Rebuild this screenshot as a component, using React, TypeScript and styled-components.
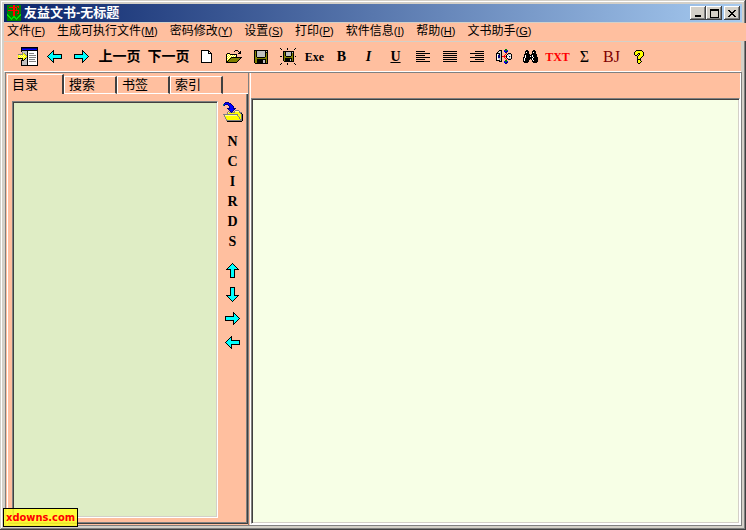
import React, { useState } from "react";
import styled, { createGlobalStyle, css } from "styled-components";

const salmon = "#ffbf9f";
const face = "#d4d0c8";
const sans = `"Liberation Sans", "Noto Sans CJK SC", sans-serif`;
const serif = `"Liberation Serif", "Noto Sans CJK SC", serif`;

const GlobalStyle = createGlobalStyle`
  * { box-sizing: border-box; }
  body { margin: 0; background: ${face}; font-family: ${sans}; color: #000; }
  button { font: inherit; color: inherit; background: none; border: 0; padding: 0; margin: 0; }
`;

const sunken = css`
  border: 1px solid;
  border-color: #808080 #fff #fff #808080;
  box-shadow: inset 1px 1px #404040, inset -1px -1px ${face};
`;

const Window = styled.div`
  position: relative;
  display: flex;
  flex-direction: column;
  min-height: 100vh;
  padding: 4px;
  background: ${face};
  box-shadow: inset -1px -1px #404040, inset 1px 1px ${face},
    inset -2px -2px #808080, inset 2px 2px #fff;
`;

const TitleBar = styled.header`
  display: flex;
  align-items: center;
  height: 18px;
  padding: 0 2px 0 3px;
  background: linear-gradient(90deg, #0a246a, #a6caf0);
`;

const Title = styled.h1`
  flex: 1;
  margin: 0 0 0 3px;
  color: #fff;
  font-size: 13px;
  line-height: 18px;
  font-weight: 700;
`;

const CaptionButtons = styled.div`
  display: flex;
`;

const CaptionButton = styled.button<{ $apart?: boolean }>`
  display: flex;
  align-items: center;
  justify-content: center;
  width: 16px;
  height: 14px;
  margin-left: ${(p) => (p.$apart ? 2 : 0)}px;
  background: ${face};
  box-shadow: inset -1px -1px #404040, inset 1px 1px #fff, inset -2px -2px #808080;
`;

const MenuBar = styled.nav`
  display: flex;
  align-items: flex-start;
  gap: 12px;
  height: 18px;
  margin: 1px -4px 1px 0;
  padding-left: 3px;
  background: ${salmon};
`;

const MenuItem = styled.button`
  font-size: 12px;
  line-height: 16px;
  white-space: nowrap;
`;

const Hotkey = styled.span`
  font-size: 11px;
`;

const Toolbar = styled.div`
  display: flex;
  align-items: center;
  height: 30px;
  margin-right: 1px;
  padding-left: 10px;
  background: ${salmon};
  border-bottom: 1px solid #fff;
`;

const Tool = styled.button<{ $wide?: boolean }>`
  display: flex;
  align-items: center;
  justify-content: center;
  flex: 0 0 ${(p) => (p.$wide ? 49 : 27)}px;
  height: 24px;
  white-space: nowrap;
`;

const ToolText = styled.span<{ $size: number; $color?: string; $look?: "italic" | "underline" | "light" }>`
  font-family: ${serif};
  font-size: ${(p) => p.$size}px;
  line-height: 20px;
  font-weight: ${(p) => (p.$look === "light" ? 400 : 700)};
  color: ${(p) => p.$color ?? "#000"};
  font-style: ${(p) => (p.$look === "italic" ? "italic" : "normal")};
  text-decoration: ${(p) => (p.$look === "underline" ? "underline" : "none")};
`;

const Body = styled.main`
  flex: 1;
  display: flex;
  margin-left: 1px;
  border: 1px solid #808080;
  background: ${salmon};
`;

const LeftPane = styled.section`
  flex: 0 0 243px;
  display: flex;
  flex-direction: column;
  padding: 1px 0 1px 1px;
  border-right: 1px solid #808080;
`;

const Tabs = styled.div`
  display: flex;
  align-items: flex-end;
`;

const Tab = styled.button<{ $active: boolean }>`
  width: ${(p) => (p.$active ? 57 : 53)}px;
  height: ${(p) => (p.$active ? 20 : 18)}px;
  padding-left: 4px;
  text-align: left;
  font-size: 13px;
  line-height: 16px;
  border-top: 1px solid #fff;
  border-left: 1px solid #fff;
  border-right: 2px solid #404040;
  border-bottom: ${(p) => (p.$active ? 0 : 1)}px solid #fff;
`;

const TabFill = styled.div`
  flex: 1;
  border-bottom: 1px solid #fff;
`;

const TabPanel = styled.div`
  flex: 1;
  display: flex;
  padding: 7px 0 5px 4px;
  border-left: 1px solid #fff;
  border-right: 1px solid #404040;
  border-bottom: 1px solid #404040;
  box-shadow: inset -1px -1px #808080;
`;

const Tree = styled.div`
  flex: 1;
  background: #dfedc5;
  ${sunken}
`;

const SideTools = styled.div`
  flex: 0 0 29px;
  display: flex;
  flex-direction: column;
  align-items: center;
`;

const SideButton = styled.button<{ $kind: "folder" | "letter" | "arrow" }>`
  display: flex;
  align-items: center;
  justify-content: center;
  width: 24px;
  height: ${(p) => ({ folder: 21, letter: 20, arrow: 24 })[p.$kind]}px;
  font-family: ${serif};
  font-size: 14px;
  font-weight: 700;
`;

const SideGroup = styled.div<{ $gap: number }>`
  margin-top: ${(p) => p.$gap}px;
`;

const RightPane = styled.section`
  flex: 1;
  display: flex;
  flex-direction: column;
  margin-left: 1px;
  border-left: 1px solid #fff;
  border-right: 1px solid #fff;
  border-bottom: 1px solid #fff;
`;

const EditorBand = styled.div`
  height: 25px;
`;

const Editor = styled.textarea`
  flex: 1;
  width: 100%;
  margin: 0;
  padding: 4px;
  resize: none;
  outline: none;
  border-radius: 0;
  font-family: ${sans};
  font-size: 13px;
  background: #f7ffe6;
  ${sunken}
`;

const Badge = styled.div`
  position: absolute;
  left: 3px;
  bottom: 3px;
  padding: 0 2px;
  border: 1px solid #000;
  background: rgba(255, 255, 40, 0.88);
  color: #f00;
  font: 700 11px/17px "DejaVu Sans Condensed", "DejaVu Sans", sans-serif;
`;

const palette: Record<string, string> = {
  K: "#000000", C: "#00ffff", W: "#ffffff", Y: "#ffff00", O: "#808000",
  G: "#808080", N: "#000080", B: "#0000ff", R: "#ff0000", L: "#c0c0c0",
  T: "#008080", E: "#008000", F: "#00e000", P: "#ffff99",
};

function Pixels({ rows }: { rows: string[] }) {
  const width = Math.max(...rows.map((r) => r.length));
  const runs: React.ReactElement[] = [];
  rows.forEach((row, y) => {
    for (let x = 0; x < row.length; ) {
      let end = x + 1;
      while (row[end] === row[x]) end++;
      if (palette[row[x]]) {
        runs.push(<rect key={`${x}-${y}`} x={x} y={y} width={end - x} height={1} fill={palette[row[x]]} />);
      }
      x = end;
    }
  });
  return (
    <svg width={width} height={rows.length} viewBox={`0 0 ${width} ${rows.length}`} shapeRendering="crispEdges" aria-hidden="true">
      {runs}
    </svg>
  );
}

const arrowLeft = [
  "......K........",
  ".....KK........",
  "....KCK........",
  "...KCCK........",
  "..KCCCKKKKKKKKK",
  ".KCCCCCCCCCCCCK",
  "KCCCCCCCCCCCCCK",
  ".KCCCCCCCCCCCCK",
  "..KCCCKKKKKKKKK",
  "...KCCK........",
  "....KCK........",
  ".....KK........",
  "......K........",
];
const mirror = (rows: string[]) => rows.map((r) => [...r].reverse().join(""));
const transpose = (rows: string[]) => [...rows[0]].map((_, i) => rows.map((r) => r[i]).join(""));
const arrowRight = mirror(arrowLeft);
const arrowUp = transpose(arrowLeft);
const arrowDown = [...arrowUp].reverse();

const panelIcon = [
  "...KKKKKKKKKKKKKKKKK",
  "...KNNNNNNNNNNNNNNNK",
  "...KBBBBBBBBBBBBBBBK",
  "...KKKKKKKKKKKKKKKKK",
  "...KLLLLLKWWWWWWWWWK",
  "....GLLLLKWWWWWWWWWK",
  "....GYGLLKWGGGGGWWWK",
  "GGGGGYYGLKWWWWWWWWWK",
  "YPYPYPYYGKWGGGGGGGWK",
  "YYPYPYPYYKWWWWWWWWWK",
  "YPYPYPYYGKWGGGGGGGWK",
  "KKKKKYYKLKWWWWWWWWWK",
  "...LKYKLLKWGGGGGGWWK",
  "...KKKLLLKWWWWWWWWWK",
  "...KLLLLLKWGGGGGGGWK",
  "...KLLLLLKWWWWWWWWWK",
  "...KLLLLLKWWWWWWWWWK",
  "...KLLLLLKWWWWWWWWWK",
  "...KKKKKKKKKKKKKKKKK",
];
const newIcon = [
  "KKKKKKKK...",
  "KWWWWWWKK..",
  "KWWWWWWKWK.",
  "KWWWWWWKKKK",
  "KWWWWWWWWWK",
  "KWWWWWWWWWK",
  "KWWWWWWWWWK",
  "KWWWWWWWWWK",
  "KWWWWWWWWWK",
  "KWWWWWWWWWK",
  "KWWWWWWWWWK",
  "KWWWWWWWWWK",
  "KKKKKKKKKKK",
];
const openIcon = [
  ".........KKK....",
  "........K...K.K.",
  ".............KK.",
  ".KKK........KKK.",
  "KYWYKKKKKKK.....",
  "KWYWYWYWYWK.....",
  "KYWYWYWYWYK.....",
  "KWYWYKKKKKKKKKKK",
  "KYWYKOOOOOOOOOK.",
  "KWYKOOOOOOOOOK..",
  "KYKOOOOOOOOOK...",
  "KKOOOOOOOOOK....",
  "KKKKKKKKKKK.....",
];
const saveIcon = [
  "KKKKKKKKKKKKKK",
  "KOKPPPPPPPPKPK",
  "KOKPPPPPPPPKKK",
  "KOKPPPPPPPPKOK",
  "KOKPPPPPPPPKOK",
  "KOKPPPPPPPPKOK",
  "KOKPPPPPPPPKOK",
  "KOOKKKKKKKKOOK",
  "KOOOOOOOOOOOOK",
  "KOOKKKKKKKKKOK",
  "KOOKKKKKKLLKOK",
  "KOOKKKKKKLLKOK",
  "KOOKKKKKKLLKOK",
  ".KKKKKKKKKKKKK",
].map((row) => row.replace(/P/g, "L"));
const saveRaysIcon = [
  "K......K.......K",
  ".K.....K......K.",
  "................",
  "...KKKKKKKKKKK..",
  "...KOKLLLLLKLK..",
  "...KOKLLLLLKOK..",
  "...KOKLLLLLKOK..",
  "...KOKLLLLLKOK..",
  "KK.KOOKKKKKOOK.K",
  "...KOOOOOOOOOK..",
  "...KOKKKKKKKOK..",
  "...KOKKKKKLKOK..",
  "...KOKKKKKLKOK..",
  "....KKKKKKKKKK..",
  "................",
  ".K.....K......K.",
  "K......K.......K",
];
const transferIcon = [
  ".........EE.....",
  "...KKK..BEEB....",
  "..KLLK..BBNN....",
  ".KLWLK...NN.....",
  "KKKKLK....R.KKK.",
  "KWLKLK...R.KLLLK",
  "KWNNLK..R.KWLWWK",
  "KWNNLKRRRRKLWNLK",
  "KWNNLK..R.KWWLWK",
  "KWLLLK...R.KLLLK",
  "KWWLLK....R.KKK.",
  "KKKKLK...EE.....",
  "...KKK..BEEB....",
  "........BBNN....",
  ".........NN.....",
];
const binocularsIcon = [
  "...KK.....KK...",
  "..KKKK...KKKK..",
  "..KWKK...KWKK..",
  "..KKKK...KKKK..",
  ".KKKKKK.KKKKKK.",
  ".KWKKKKKKWKKKK.",
  ".KWKKKKWKWKKKK.",
  "KKWKKKKKKKWKKKK",
  "KWKKKKKKKWKKKKK",
  "KWKKKKK.KWKKKKK",
  "KWKKKK...KWKKKK",
  "KKKKKK...KKKKKK",
  ".KKKK.....KKKK.",
];
const helpIcon = [
  "..KKKKKK..",
  ".KYYYYYYK.",
  "KYYYYYYYYK",
  "KYYYKKYYYK",
  "KYYK.KYYYK",
  ".KK.KYYYYK",
  "...KYYYYK.",
  "...KYYYK..",
  "...KYYK...",
  "...KKKK...",
  "...KYYK...",
  "...KYYYK..",
  "...KYYK...",
  "....KK....",
];
const folderIcon = [
  "..NNNN..............",
  ".NBBBBNN............",
  "TBNNNBBBN...........",
  "TN...NBBBN..........",
  "......NBBBN.........",
  "......NBBBN.........",
  "....NNNBBBNNN.......",
  ".....NBBBBBN........",
  "......NBBBN.GGGG....",
  ".....G.NBN.GPPPPG...",
  "....GPGGNGGGYYYYGGG.",
  "....GYYYYYYYYYYYYGK.",
  "GGGGGGGGGGGGGGGYYYGK",
  ".GPPPPPPPPPPPPGYYYGK",
  ".GYYYYYYYYYYYYYGYYGK",
  "..GYYYYYYYYYYYYYGYGK",
  "..GYYYYYYYYYYYYYGYGK",
  "...GYYYYYYYYYYYYYGGK",
  "...GGGGGGGGGGGGGGGGK",
  "....KKKKKKKKKKKKKKK.",
];
const appIcon = [
  "EEEEEERREEEEEE",
  "EEEEEERREERREE",
  "EERRRRRRRREREE",
  "EEEEEERREREEEE",
  "EEEEEERREREEEE",
  "ERRRRRRRRRRREE",
  "EEEEEERREEEREE",
  "EEEEEERREEEREE",
  "EEEEEERREERREE",
  "FEEEEERREEEEEF",
  "FFEEEERREEEEFF",
  "EFFEEEFFEEEFFE",
  "EEFFEFFFFEFFEE",
  "EEEFFFEEFFFEEE",
  "EEEEFEEEEFEEEE",
  "EEEEEEEEEEEEEE",
];

const textLines = (part: string) => {
  const full = "KKKKKKKKKKKKKK";
  const gap = "..............";
  return [part, gap, full, gap, part, gap, full, gap, part, gap, full];
};

const minimize = ["......", "......", "......", "......", "......", "......", "KKKKKK", "KKKKKK"];
const maximize = ["KKKKKKKKK", "KKKKKKKKK", "K.......K", "K.......K", "K.......K", "K.......K", "K.......K", "K.......K", "KKKKKKKKK"];
const closeMark = ["KK....KK", ".KK..KK.", "..KKKK..", "...KK...", "..KKKK..", ".KK..KK.", "KK....KK"];

const menus: [string, string][] = [
  ["文件", "F"], ["生成可执行文件", "M"], ["密码修改", "Y"], ["设置", "S"],
  ["打印", "P"], ["软件信息", "I"], ["帮助", "H"], ["文书助手", "G"],
];

interface ToolSpec {
  label: string;
  icon?: string[];
  text?: string;
  size?: number;
  color?: string;
  look?: "italic" | "underline" | "light";
  wide?: boolean;
}

const tools: ToolSpec[] = [
  { label: "显示目录", icon: panelIcon },
  { label: "后退", icon: arrowLeft },
  { label: "前进", icon: arrowRight },
  { label: "上一页", text: "上一页", size: 14, wide: true },
  { label: "下一页", text: "下一页", size: 14, wide: true },
  { label: "新建", icon: newIcon },
  { label: "打开", icon: openIcon },
  { label: "保存", icon: saveIcon },
  { label: "另存", icon: saveRaysIcon },
  { label: "Exe", text: "Exe", size: 12 },
  { label: "粗体", text: "B", size: 14 },
  { label: "斜体", text: "I", size: 14, look: "italic" },
  { label: "下划线", text: "U", size: 14, look: "underline" },
  { label: "左对齐", icon: textLines("KKKKKKKKK.....") },
  { label: "居中", icon: textLines("KKKKKKKKKKKKKK") },
  { label: "右对齐", icon: textLines(".....KKKKKKKKK") },
  { label: "转换", icon: transferIcon },
  { label: "查找", icon: binocularsIcon },
  { label: "TXT", text: "TXT", size: 12, color: "#ff0000" },
  { label: "求和", text: "Σ", size: 16, look: "light" },
  { label: "BJ", text: "BJ", size: 16, color: "#800000", look: "light" },
  { label: "关于", icon: helpIcon },
];

const tabNames = ["目录", "搜索", "书签", "索引"];

export default function App() {
  const [active, setActive] = useState(0);
  return (
    <Window>
      <GlobalStyle />
      <TitleBar>
        <Pixels rows={appIcon} />
        <Title>友益文书-无标题</Title>
        <CaptionButtons>
          <CaptionButton aria-label="最小化"><Pixels rows={minimize} /></CaptionButton>
          <CaptionButton aria-label="最大化"><Pixels rows={maximize} /></CaptionButton>
          <CaptionButton aria-label="关闭" $apart><Pixels rows={closeMark} /></CaptionButton>
        </CaptionButtons>
      </TitleBar>
      <MenuBar>
        {menus.map(([name, key]) => (
          <MenuItem key={key}>
            {name}<Hotkey>(<u>{key}</u>)</Hotkey>
          </MenuItem>
        ))}
      </MenuBar>
      <Toolbar role="toolbar">
        {tools.map((t) => (
          <Tool key={t.label} aria-label={t.label} $wide={t.wide}>
            {t.icon ? <Pixels rows={t.icon} /> : (
              <ToolText $size={t.size ?? 14} $color={t.color} $look={t.look}>{t.text}</ToolText>
            )}
          </Tool>
        ))}
      </Toolbar>
      <Body>
        <LeftPane>
          <Tabs role="tablist">
            {tabNames.map((name, i) => (
              <Tab key={name} role="tab" aria-selected={i === active} $active={i === active} onClick={() => setActive(i)}>
                {name}
              </Tab>
            ))}
            <TabFill />
          </Tabs>
          <TabPanel role="tabpanel">
            <Tree role="tree" aria-label="目录" />
            <SideTools>
              <SideButton $kind="folder" aria-label="打开目录"><Pixels rows={folderIcon} /></SideButton>
              <SideGroup $gap={10}>
                {[..."NCIRDS"].map((c) => <SideButton key={c} $kind="letter">{c}</SideButton>)}
              </SideGroup>
              <SideGroup $gap={6}>
                <SideButton $kind="arrow" aria-label="上移"><Pixels rows={arrowUp} /></SideButton>
                <SideButton $kind="arrow" aria-label="下移"><Pixels rows={arrowDown} /></SideButton>
                <SideButton $kind="arrow" aria-label="右移"><Pixels rows={arrowRight} /></SideButton>
                <SideButton $kind="arrow" aria-label="左移"><Pixels rows={arrowLeft} /></SideButton>
              </SideGroup>
            </SideTools>
          </TabPanel>
        </LeftPane>
        <RightPane>
          <EditorBand />
          <Editor aria-label="正文" />
        </RightPane>
      </Body>
      <Badge>xdowns.com</Badge>
    </Window>
  );
}
